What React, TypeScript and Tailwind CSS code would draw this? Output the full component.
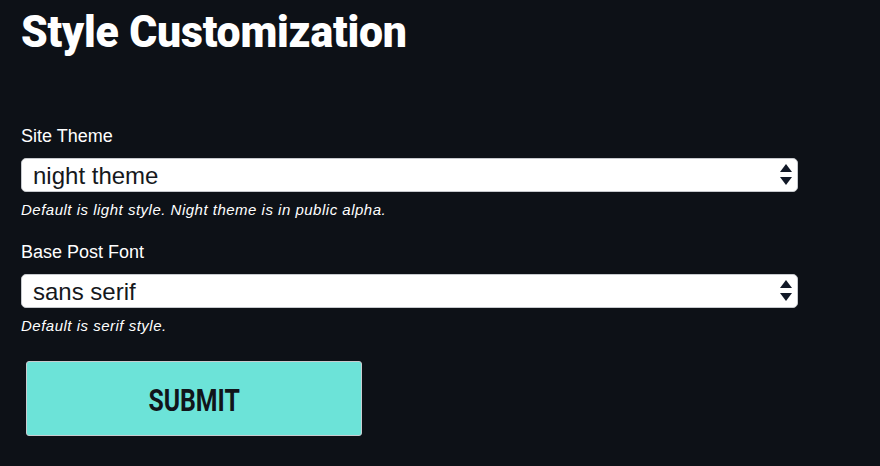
import React from "react";

function Arrows() {
  return (
    <svg width="12" height="22" viewBox="0 0 12 22" className="shrink-0">
      <path d="M6 0 L12 8 L0 8 Z" fill="#111827" />
      <path d="M0 13 L12 13 L6 21 Z" fill="#111827" />
    </svg>
  );
}

function Field({ label, value, help, first }: { label: string; value: string; help: string; first?: boolean }) {
  return (
    <div className={first ? "flex flex-col" : "mt-[23px] flex flex-col"}>
      <div className="text-[18px] leading-[20px] text-white">{label}</div>
      <div className="mt-[12px] flex h-[34px] w-[777px] items-center justify-between rounded-[5px] border border-[#c6c9cd] bg-white pl-[11px] pr-[5px]">
        <span className="pt-[2px] text-[24px] leading-none text-[#16181c]">{value}</span>
        <Arrows />
      </div>
      <div className="mt-[9px] text-[15px] italic leading-[18px] tracking-[0.5px] text-white">{help}</div>
    </div>
  );
}

export default function App() {
  return (
    <div
      className="h-[466px] w-[880px] bg-[#0d1117] pl-[21px] pt-[6px]"
      style={{ fontFamily: '"Liberation Sans", Arial, sans-serif' }}
    >
      <h1 className="h-[52px] text-white">
        <span
          className="inline-block origin-left scale-x-[0.95] text-[45px] font-black leading-[52px] tracking-[-0.2px]"
          style={{ fontFamily: 'Roboto, "Liberation Sans", sans-serif' }}
        >
          Style Customization
        </span>
      </h1>
      <div className="mt-[68px] flex flex-col">
        <Field first label="Site Theme" value="night theme" help="Default is light style. Night theme is in public alpha." />
        <Field label="Base Post Font" value="sans serif" help="Default is serif style." />
      </div>
      <button className="ml-[5px] mt-[26px] flex h-[75px] w-[336px] items-center justify-center rounded-[3px] border border-[#c8ccd0] bg-[#6ce3d8] pt-[4px] text-[#11141a]">
        <span
          className="inline-block scale-x-[0.8] text-[31px] font-bold leading-none"
          style={{ fontFamily: 'Roboto, "Liberation Sans", sans-serif' }}
        >
          SUBMIT
        </span>
      </button>
    </div>
  );
}
